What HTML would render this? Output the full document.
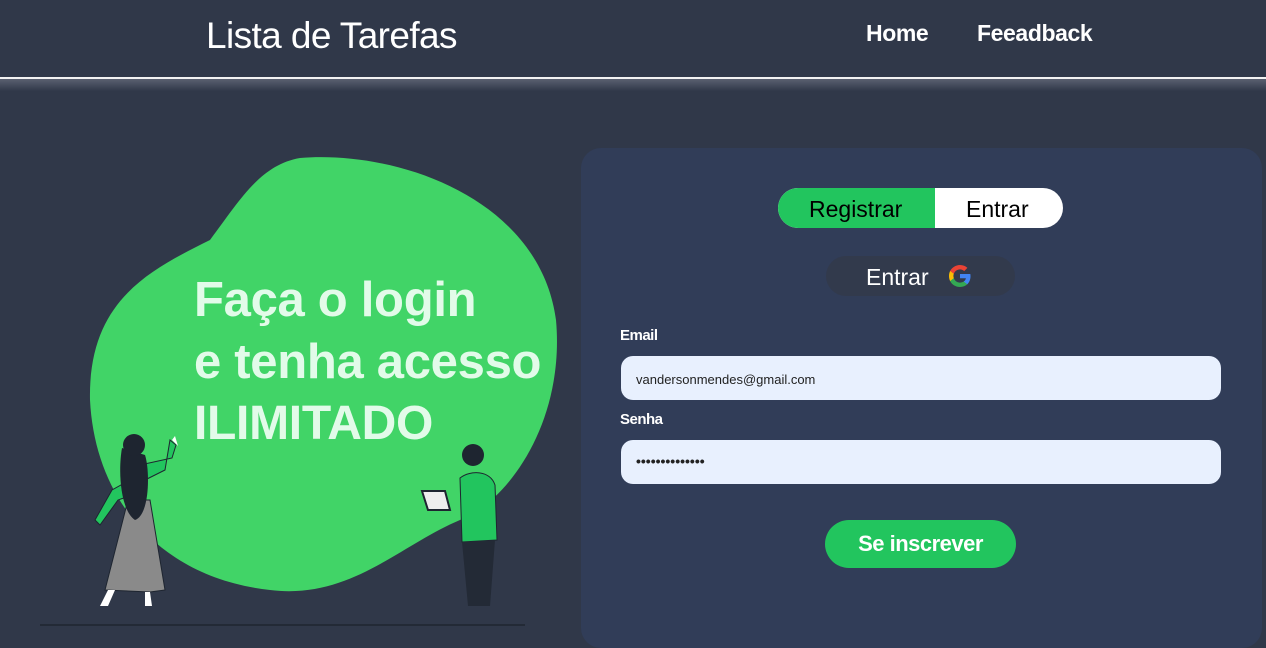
<!DOCTYPE html>
<html><head><meta charset="utf-8"><style>
*{margin:0;padding:0;box-sizing:border-box}
body{width:1266px;height:632px;overflow:hidden;background:#303849;font-family:"Liberation Sans",sans-serif;position:relative}
.hdr{position:absolute;left:0;top:0;width:1266px;height:78px;background:#303849}
.line{position:absolute;left:0;top:77px;width:1266px;height:2px;background:#f2f2f2}
.shadow{position:absolute;left:0;top:79px;width:1266px;height:12px;background:linear-gradient(#5a6070,#303849)}
.title{position:absolute;left:206px;top:15px;font-size:37px;color:#fff;letter-spacing:-0.6px}
.nav{position:absolute;top:20px;font-size:23px;color:#fff;font-weight:bold;letter-spacing:-0.4px}
.hero{position:absolute;left:194px;color:#e2fbe9;font-weight:bold;font-size:49px;letter-spacing:-0.3px}
.card{position:absolute;left:581px;top:148px;width:681px;height:500px;background:#313d58;border-radius:20px}
.tog{position:absolute;left:778px;top:188px;width:285px;height:40px;border-radius:20px;overflow:hidden;background:#fff}
.tog .g{position:absolute;left:0;top:0;width:157px;height:40px;background:#22c55e}
.tog span{position:absolute;top:8px;font-size:23px;color:#000}
.gb{position:absolute;left:826px;top:256px;width:189px;height:40px;border-radius:20px;background:#323a4c}
.lbl{position:absolute;left:620px;font-size:15px;font-weight:bold;color:#fff;letter-spacing:-0.5px}
.inp{position:absolute;left:621px;width:600px;height:44px;border-radius:12px;background:#e8f0fe;font-size:13px;color:#222;padding:16px 0 0 15px}
.btn{position:absolute;left:825px;top:520px;width:191px;height:48px;border-radius:24px;background:#22c55e;color:#fff;font-weight:bold;font-size:22px;text-align:center;line-height:48px;letter-spacing:-0.5px}
</style></head><body>
<div class="hdr"></div>
<div class="title">Lista de Tarefas</div>
<div class="nav" style="left:866px">Home</div>
<div class="nav" style="left:977px">Feeadback</div>
<div class="line"></div><div class="shadow"></div>

<svg style="position:absolute;left:0;top:0" width="580" height="632">
<path d="M300 158 C400 150 540 200 556 320 C565 420 510 500 460 520 C400 545 350 600 270 590 C160 578 95 500 90 400 C88 300 150 270 210 240 C240 200 260 165 300 158 Z" fill="#41d467"/>
<line x1="40" y1="625" x2="525" y2="625" stroke="#232a36" stroke-width="2"/>
<path d="M130 480 L112 490 L95 520 L100 525 L118 500 L132 495 Z" fill="#22c55e" stroke="#1e2530"/>
<path d="M140 465 L172 458 L176 445 L170 440 L165 470 L145 480 Z" fill="#22c55e" stroke="#1e2530"/>
<path d="M128 500 L150 500 L165 590 L150 592 L105 590 Z" fill="#8a8a8a" stroke="#1e2530"/>
<path d="M122 448 C118 470 120 510 135 520 C150 515 150 470 145 455 Z" fill="#1e2530"/>
<circle cx="134" cy="445" r="11" fill="#1e2530"/>
<path d="M108 590 L100 606 L108 606 L115 590 Z M145 592 L145 606 L152 606 L150 592 Z" fill="#fff"/>
<path d="M172 440 L175 436 L178 446 Z" fill="#fff"/>
<circle cx="473" cy="455" r="11" fill="#1e2530"/>
<path d="M460 478 C470 470 490 470 495 485 L497 540 L462 542 Z" fill="#22c55e" stroke="#1e2530"/>
<path d="M462 542 L495 540 L490 606 L468 606 Z" fill="#232a36"/>
<path d="M422 491 L445 491 L450 510 L428 510 Z" fill="#eee" stroke="#1e2530" stroke-width="2"/>
</svg>
<div class="hero" style="top:272px">Faça o login</div>
<div class="hero" style="top:334px">e tenha acesso</div>
<div class="hero" style="top:396px;font-size:48px">ILIMITADO</div>

<div class="card"></div>
<div class="tog"><div class="g"></div><span style="left:31px">Registrar</span><span style="left:188px">Entrar</span></div>
<div class="gb"><span style="position:absolute;left:40px;top:8px;color:#fff;font-size:23px">Entrar</span>
<svg style="position:absolute;left:122px;top:8px" width="24" height="24" viewBox="0 0 24 24">
<path d="M22.5 12.2c0-.8-.1-1.5-.2-2.2H12v4.2h5.9c-.3 1.4-1 2.5-2.2 3.3v2.7h3.6c2-1.9 3.2-4.7 3.2-8z" fill="#4285F4"/>
<path d="M12 23c3 0 5.5-1 7.3-2.7l-3.6-2.8c-1 .7-2.2 1.1-3.700 1.1-2.900 0-5.300-1.900-6.200-4.500H2.100v2.900C3.900 20.600 7.700 23 12 23z" fill="#34A853"/>
<path d="M5.8 14.1c-.2-.7-.4-1.4-.4-2.1s.1-1.4.4-2.1V7H2.1C1.4 8.5 1 10.2 1 12s.4 3.5 1.1 5z" fill="#FBBC05"/>
<path d="M12 5.4c1.6 0 3.1.6 4.2 1.7l3.2-3.2C17.5 2.1 15 1 12 1 7.7 1 3.9 3.5 2.1 7l3.7 2.9C6.7 7.3 9.1 5.4 12 5.4z" fill="#EA4335"/>
</svg></div>
<div class="lbl" style="top:327px">Email</div>
<div class="inp" style="top:356px">vandersonmendes@gmail.com</div>
<div class="lbl" style="top:411px">Senha</div>
<div class="inp" style="top:440px;font-size:14px;font-weight:bold;padding-top:13px">••••••••••••••</div>
<div class="btn">Se inscrever</div>
</body></html>
